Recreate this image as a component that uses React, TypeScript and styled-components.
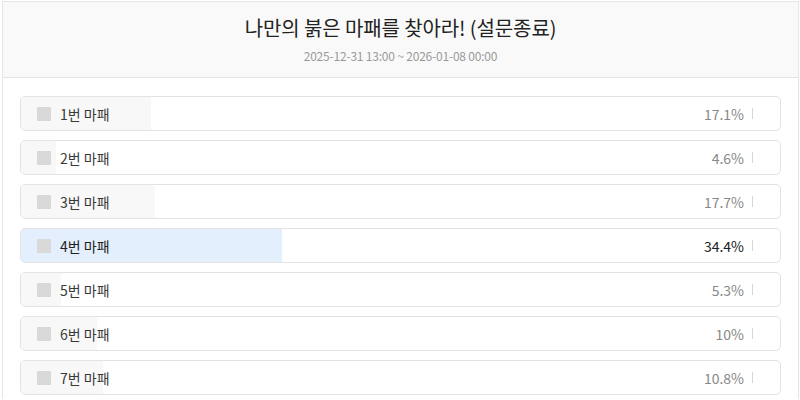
import React from "react";
import styled, { createGlobalStyle } from "styled-components";

const Global = createGlobalStyle`
  html, body { margin: 0; padding: 0; background: #fff; }
  body { font-family: "Noto Sans CJK KR", "Noto Sans", sans-serif; }
`;

const Frame = styled.div`
  margin: 1px 1px 0 2px;
  border: 1px solid #e6e6e6;
  border-bottom: none;
  height: 398px;
  box-sizing: border-box;
  overflow: hidden;
`;

const Header = styled.div`
  background: #f9f9f9;
  border-bottom: 1px solid #e3e3e3;
  height: 76px;
  box-sizing: border-box;
  display: flex;
  flex-direction: column;
  align-items: center;
  padding-top: 12px;
`;

const Title = styled.h1`
  margin: 0;
  font-size: 20px;
  font-weight: 400;
  color: #222;
  line-height: 28px;
  letter-spacing: -0.1px;
`;

const DateText = styled.div`
  margin-top: 6px;
  font-size: 12px;
  color: #999;
  line-height: 16px;
  letter-spacing: -0.2px;
`;

const List = styled.div`
  display: flex;
  flex-direction: column;
  gap: 9px;
  padding: 18px 17px 0 17px;
`;

const Item = styled.div`
  position: relative;
  height: 35px;
  box-sizing: border-box;
  border: 1px solid #e3e3e3;
  border-radius: 5px;
  overflow: hidden;
  background: #fff;
`;

const Bar = styled.div<{ $top?: boolean }>`
  position: absolute;
  left: 0;
  top: 0;
  bottom: 0;
  background: ${(p) => (p.$top ? "#e3effc" : "#f8f8f8")};
`;

const Content = styled.div`
  position: relative;
  display: flex;
  align-items: center;
  height: 100%;
  padding: 0 27px 0 16px;
`;

const Box = styled.span`
  width: 14px;
  height: 14px;
  background: #d9d9d9;
  margin-right: 9px;
  flex: none;
`;

const Label = styled.span<{ $top?: boolean }>`
  font-size: 14px;
  color: ${(p) => (p.$top ? "#222" : "#3a3a3a")};
  flex: 1;
`;

const Pct = styled.span<{ $top?: boolean }>`
  font-size: 14px;
  color: ${(p) => (p.$top ? "#222" : "#888")};
`;

const Sep = styled.span`
  width: 1px;
  height: 11px;
  background: #d6d6d6;
  margin-left: 8px;
`;

const items = [
  { n: 1, p: 17.1, t: "17.1%" },
  { n: 2, p: 4.6, t: "4.6%" },
  { n: 3, p: 17.7, t: "17.7%" },
  { n: 4, p: 34.4, t: "34.4%", top: true },
  { n: 5, p: 5.3, t: "5.3%" },
  { n: 6, p: 10, t: "10%" },
  { n: 7, p: 10.8, t: "10.8%" },
];

export default function App() {
  return (
    <>
      <Global />
      <Frame>
        <Header>
          <Title>나만의 붉은 마패를 찾아라! (설문종료)</Title>
          <DateText>2025-12-31 13:00 ~ 2026-01-08 00:00</DateText>
        </Header>
        <List>
          {items.map((it) => (
            <Item key={it.n}>
              <Bar $top={it.top} style={{ width: `${it.p}%` }} />
              <Content>
                <Box />
                <Label $top={it.top}>{it.n}번 마패</Label>
                <Pct $top={it.top}>{it.t}</Pct>
                <Sep />
              </Content>
            </Item>
          ))}
        </List>
      </Frame>
    </>
  );
}
